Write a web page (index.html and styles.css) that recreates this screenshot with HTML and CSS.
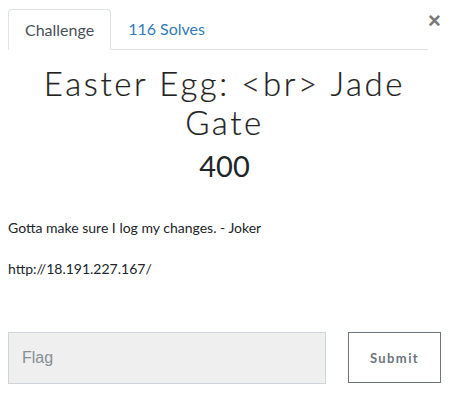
FILE: index.html
```html
<!DOCTYPE html>
<html>
<head>
<meta charset="utf-8">
<link rel="stylesheet" href="styles.css">
</head>
<body>
<div class="modal">
  <div class="header">
    <ul class="tabs">
      <li class="tab active">Challenge</li>
      <li class="tab link">116 Solves</li>
    </ul>
    <span class="close">&times;</span>
  </div>
  <div class="body">
    <h2 class="title">Easter Egg: &lt;br&gt; Jade Gate</h2>
    <h3 class="value">400</h3>
    <p class="desc">Gotta make sure I log my changes. - Joker</p>
    <p class="desc">http://18.191.227.167/</p>
    <div class="form">
      <input class="flag" type="text" placeholder="Flag">
      <button class="submit">Submit</button>
    </div>
  </div>
</div>
</body>
</html>
```
FILE: styles.css
```css
* { box-sizing: border-box; }
html, body { margin: 0; padding: 0; background: #fff; }
body { font-family: Lato, sans-serif; color: #212529; }
.modal { padding: 9px 13px 0 8px; }
.header { display: flex; align-items: flex-start; }
.tabs {
  list-style: none; margin: 0; padding: 0;
  display: flex; flex: 1;
  border-bottom: 1px solid #dee2e6;
  height: 41px;
}
.tab {
  font-size: 16px; padding: 0 16px; line-height: 40px; height: 41px;
}
.tab.active {
  border: 1px solid #dee2e6; border-bottom-color: #fff;
  border-radius: 4px 4px 0 0; color: #495057;
}
.tab.link { color: #337ab7; padding-left: 17px; }
.close {
  font-family: "Liberation Sans", Arial, sans-serif;
  font-weight: bold; font-size: 22px; color: #777; line-height: 1;
  width: 13px; margin-top: 1px;
}
.title {
  font-family: Lato, sans-serif; font-weight: 300;
  font-size: 33px; letter-spacing: 2.6px; line-height: 39px;
  text-align: center; margin: 14px 10px 0; color: #222;
  -webkit-text-stroke: 0.2px #222;
}
.value {
  font-family: Lato, sans-serif; font-weight: 400; font-size: 29px;
  text-align: center; margin: 6px 0 0; line-height: 36px;
}
.desc { font-size: 14px; margin: 35px 0 0; line-height: 17px; }
.desc + .desc { margin-top: 24px; }
.form { display: flex; justify-content: space-between; margin-top: 55px; }
.flag {
  width: 318px; height: 52px; background: #efefef;
  border: 1px solid #ced4da; padding: 0 13px;
  font-family: "Liberation Sans", Arial, sans-serif; font-size: 16px;
}
.flag::placeholder { color: #868e96; }
.submit {
  width: 93px; height: 51px; background: #fff;
  border: 1px solid #6c757d; color: #6c757d;
  font-family: Lato, sans-serif; font-weight: bold; font-size: 13px;
  letter-spacing: 1.4px;
}
```
